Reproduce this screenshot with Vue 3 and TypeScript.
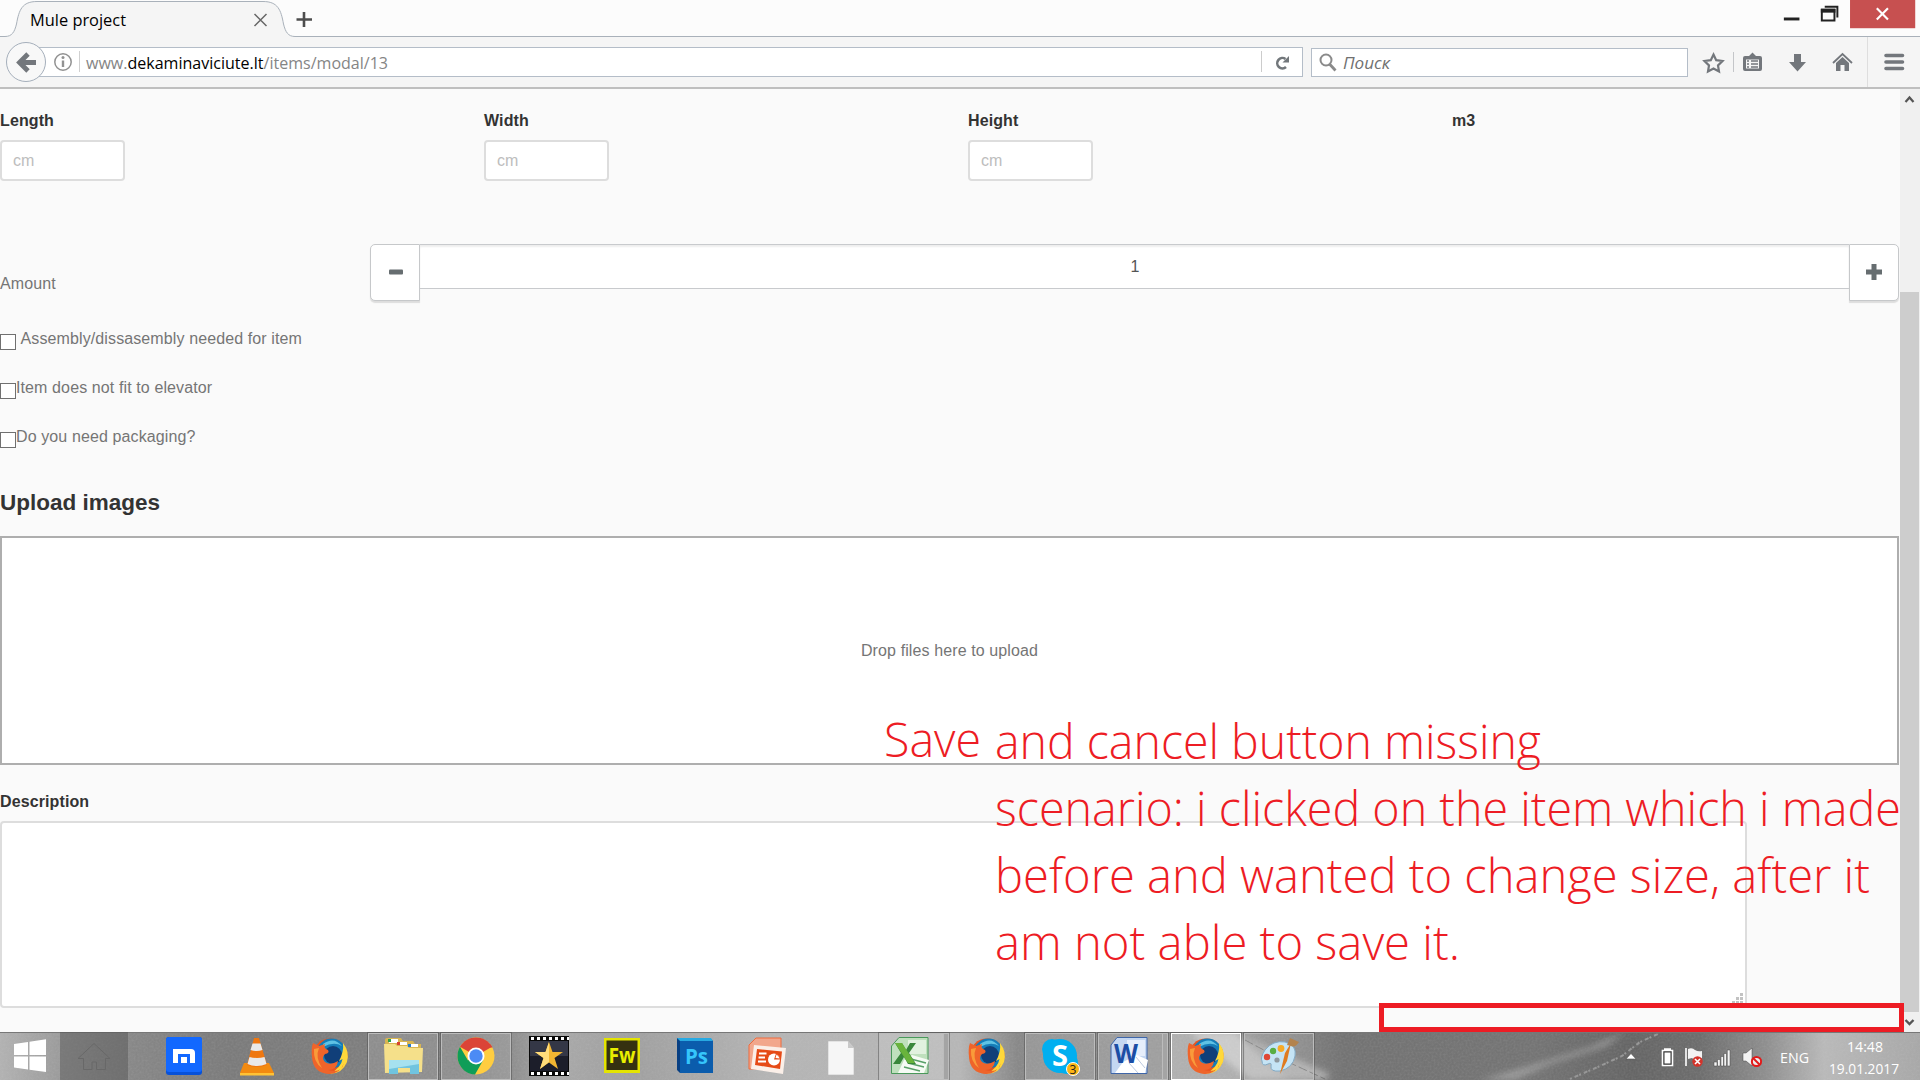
<script setup lang="ts">
interface Task {
  id: string
  state?: 'open' | 'active' | 'stack'
}

const dimensions: { label: string; input: boolean }[] = [
  { label: 'Length', input: true },
  { label: 'Width', input: true },
  { label: 'Height', input: true },
  { label: 'm3', input: false },
]

const options: string[] = [
  '\u00a0Assembly/dissasembly needed for item',
  'Item does not fit to elevator',
  'Do you need packaging?',
]

const tasks: Task[] = [
  { id: 'maxthon' },
  { id: 'vlc' },
  { id: 'firefox' },
  { id: 'explorer', state: 'open' },
  { id: 'chrome', state: 'open' },
  { id: 'film' },
  { id: 'fw' },
  { id: 'ps' },
  { id: 'ppt' },
  { id: 'doc' },
  { id: 'excel', state: 'stack' },
  { id: 'firefox' },
  { id: 'skype', state: 'open' },
  { id: 'word', state: 'stack' },
  { id: 'firefox', state: 'active' },
  { id: 'paint', state: 'open' },
]
</script>

<template>
  <div class="screen">
    <header class="tabs">
      <svg class="tab" width="320" height="37" viewBox="0 0 320 37">
        <path d="M0 36.5H5C12 36.5 14.500 32 16.500 24C19 10 22 1.500 37 1.500H263C278 1.500 281 10 283.500 24C285.500 32 288 36.500 295 36.500V37H0Z" fill="#f5f5f5" />
        <path d="M0 36.500H5C12 36.500 14.500 32 16.500 24C19 10 22 1.500 37 1.500H263C278 1.500 281 10 283.500 24C285.500 32 288 36.500 295 36.500H320" fill="none" stroke="#a9b1ba" />
        <text x="30" y="26" textLength="96" lengthAdjust="spacingAndGlyphs" class="ui" font-size="16.500">Mule project</text>
        <path d="M254.500 14L266.500 26M266.500 14L254.500 26" stroke="#666" stroke-width="1.500" />
        <path d="M296.500 19.500H312M304 12V27" stroke="#4d4d4d" stroke-width="2.600" />
      </svg>
      <div class="tabs-rest"></div>
      <svg class="controls" width="138" height="37" viewBox="-1 0 138 37">
        <rect x="-1" y="18" width="16" height="3" fill="#222" />
        <path d="M41 7H54V18" fill="none" stroke="#222" stroke-width="2" />
        <path d="M38 10V21H51V10Z" fill="none" stroke="#222" stroke-width="2" />
        <path d="M37 9H52V13H37Z" fill="#222" />
        <rect x="67" y="0" width="67" height="29" fill="#c75050" />
        <path d="M94.500 8.500L106 20M106 8.500L94.500 20" stroke="#fff" stroke-width="2.200" />
      </svg>
    </header>

    <nav class="nav">
      <svg class="back" width="42" height="42" viewBox="0 0 42 42">
        <circle cx="21" cy="21" r="19.500" fill="#f8f8f8" stroke="#a5afbb" />
        <path d="M31 21.500H17M23 13L14.500 21.500L23 30" fill="none" stroke="#73777c" stroke-width="4.800" />
      </svg>
      <div class="url">
        <svg width="360" height="28" viewBox="0 0 360 28">
          <circle cx="23" cy="14" r="8.200" fill="none" stroke="#929292" stroke-width="1.500" />
          <path d="M23 12.500V19" stroke="#929292" stroke-width="2.400" />
          <circle cx="23" cy="9.500" r="1.500" fill="#929292" />
          <path d="M39.500 3V24" stroke="#d0d0d0" />
          <text x="46" y="21" textLength="302" lengthAdjust="spacingAndGlyphs" class="ui" font-size="16.500" fill="#858585">www.<tspan fill="#000">dekaminaviciute.lt</tspan>/items/modal/13</text>
        </svg>
        <svg class="reload" width="41" height="28" viewBox="0 0 41 28">
          <path d="M.5 3V24" stroke="#ccc" />
          <path d="M25 19A5.200 5.200 0 1 1 24.500 11" fill="none" stroke="#72777b" stroke-width="2.600" />
          <path d="M28 8V14.500H21.500Z" fill="#72777b" />
        </svg>
      </div>
      <div class="search">
        <svg width="120" height="27" viewBox="0 0 120 27">
          <circle cx="14" cy="11" r="5.500" fill="none" stroke="#8a8a8a" stroke-width="2" />
          <path d="M17.500 15L23.500 21.500" stroke="#8a8a8a" stroke-width="2.800" />
          <text x="31" y="20" textLength="47" lengthAdjust="spacingAndGlyphs" class="ui" font-size="16.500" font-style="italic" fill="#707070">Поиск</text>
        </svg>
      </div>
      <svg class="tools" width="232" height="50" viewBox="1688 37 232 50" fill="#73777c">
        <path d="M1713.500 54.500L1716.200 60.200L1722.500 61L1718 65.400L1719 71.500L1713.500 68.500L1708 71.500L1709 65.400L1704.500 61L1710.800 60.200Z" fill="none" stroke="#73777c" stroke-width="2.200" />
        <path d="M1733.500 52V72" stroke="#c4c6c9" />
        <path d="M1745 56H1749L1752.500 52.500L1756 56H1760Q1762 56 1762 58V69Q1762 71 1760 71H1745Q1743 71 1743 69V58Q1743 56 1745 56Z" />
        <path d="M1746 59.500H1759V68.500H1746Z" fill="#f5f5f5" />
        <path d="M1747 61H1749M1751 61H1758M1747 64H1749M1751 64H1758M1747 67H1749M1751 67H1758" stroke="#73777c" stroke-width="1.500" />
        <path d="M1794 54H1801V62H1806L1797.500 71.500L1789 62H1794Z" />
        <path d="M1833 63L1842.500 54L1852 63" fill="none" stroke="#73777c" stroke-width="1.800" />
        <path d="M1836 63L1842.500 57L1849 63V71H1844.500V65H1840.500V71H1836Z" />
        <path d="M1867.500 37V87" stroke="#dedede" />
        <path d="M1886 55.500H1902.500M1886 62H1902.500M1886 68.500H1902.500" stroke="#73777c" stroke-width="3.600" stroke-linecap="round" />
      </svg>
    </nav>

    <main class="viewport">
      <section class="page">
        <div class="dims">
          <div v-for="d in dimensions" :key="d.label" class="dim">
            <label class="bold">{{ d.label }}</label>
            <div v-if="d.input" class="field">cm</div>
          </div>
        </div>
        <div class="amount">
          <span class="amount-label">Amount</span>
          <button class="step left"><svg width="18" height="18"><rect x="2" y="6.500" width="14" height="5" rx="1" fill="#666d70" /></svg></button>
          <div class="count">1</div>
          <button class="step right"><svg width="18" height="18"><path d="M1 6.500H6.500V1H11.500V6.500H17V11.500H11.500V17H6.500V11.500H1Z" fill="#666d70" /></svg></button>
        </div>
        <div v-for="o in options" :key="o" class="option"><i class="box"></i><span>{{ o }}</span></div>
        <h2>Upload images</h2>
        <div class="drop">Drop files here to upload</div>
        <label class="bold desc">Description</label>
        <div class="area">
          <svg width="14" height="14" fill="#c2c2c2"><path d="M9 1h3v3H9zM5 5h3v3H5zM9 5h3v3H9zM1 9h3v3H1zM5 9h3v3H5zM9 9h3v3H9z" /></svg>
        </div>
      </section>
      <aside class="scroll">
        <svg width="20" height="20"><path d="M5.500 13L9.500 8.500L13.500 13" fill="none" stroke="#555" stroke-width="2.200" /></svg>
        <div class="thumb"></div>
        <svg width="20" height="20"><path d="M5.500 8L9.500 12L13.500 8" fill="none" stroke="#555" stroke-width="2.400" /></svg>
      </aside>
    </main>

    <footer class="taskbar">
      <svg class="wall" width="1920" height="48" viewBox="0 0 1920 48">
        <defs>
          <linearGradient id="wall">
            <stop offset="0" stop-color="#b2b2b2" /><stop offset=".03" stop-color="#9c9c9c" />
            <stop offset=".07" stop-color="#878787" /><stop offset=".12" stop-color="#7b7b7b" />
            <stop offset=".24" stop-color="#808080" /><stop offset=".265" stop-color="#8c8c8c" />
            <stop offset=".29" stop-color="#a9a9a9" /><stop offset=".33" stop-color="#a0a0a0" />
            <stop offset=".4" stop-color="#b4b4b4" /><stop offset=".5" stop-color="#b6b6b6" />
            <stop offset=".53" stop-color="#888" /><stop offset=".6" stop-color="#929292" />
            <stop offset=".65" stop-color="#909090" /><stop offset=".7" stop-color="#737373" />
            <stop offset=".8" stop-color="#747474" /><stop offset=".85" stop-color="#656565" />
            <stop offset=".885" stop-color="#6d6d6d" /><stop offset=".92" stop-color="#8f8f8f" />
            <stop offset=".95" stop-color="#b9b9b9" /><stop offset="1" stop-color="#a8a8a8" />
          </linearGradient>
          <filter id="soft" x="-10%" y="-50%" width="120%" height="200%"><feGaussianBlur stdDeviation="3" /></filter>
          <filter id="grain"><feTurbulence type="fractalNoise" baseFrequency=".5" numOctaves="2" /><feColorMatrix values="0 0 0 0 .7  0 0 0 0 .7  0 0 0 0 .7  .6 0 0 0 -.2" /></filter>
        </defs>
        <rect width="1920" height="48" fill="url(#wall)" />
        <g filter="url(#soft)">
          <path d="M1480 48L1530 34L1590 15L1625 0L1606 14L1550 32L1515 48Z" fill="#999" />
          <path d="M1190 0H1235L1290 48H1250Z" fill="#b8b8b8" />
          <path d="M1245 5L1330 42L1325 48H1290Z" fill="#aaa" />
        </g>
        <path d="M1570 47L1600 34L1622 24L1640 10L1658 2" fill="none" stroke="#959595" stroke-width="2" stroke-dasharray="2 3 4 1" />
        <path d="M1245 8L1275 24L1325 47" fill="none" stroke="#777" stroke-dasharray="9 3" />
        <rect width="1920" height="48" filter="url(#grain)" opacity=".35" />
        <path d="M0 .5H1920" stroke="#777" />
      </svg>
      <svg class="start" width="60" height="48" viewBox="0 0 60 48" fill="#fff">
        <path d="M14 12L28 10V23H14ZM29.500 9.800L46 7.300V23H29.500ZM14 24.500H28V37.500L14 35.500ZM29.500 24.500H46V40L29.500 37.700Z" />
      </svg>
      <svg class="homebtn" width="68" height="48" viewBox="0 0 68 48">
        <path d="M18 26.500L34 11.500L50 26.500H45.500V37.500H36.500V30H32V37.500H23.500V26.500Z" fill="none" stroke="#686868" />
      </svg>
      <div class="tasks">
        <div v-for="(t, i) in tasks" :key="i" class="task" :class="t.state">
          <svg class="icon" width="40" height="40" viewBox="0 0 40 40">
            <g v-if="t.id === 'maxthon'">
              <rect x="2" y="1" width="36" height="38" rx="3" fill="#0751d9" /><rect x="2" y="1" width="36" height="35" rx="3" fill="#1268ff" />
              <path d="M9 13H27Q31 13 31 17V27H26V18H14V27H9ZM17 21H23V27H17Z" fill="#fff" />
            </g>
            <g v-else-if="t.id === 'vlc'">
              <path d="M7 27H32L37 37V39H3V37Z" fill="#f28a10" /><path d="M3 37H37V39.500H3Z" fill="#ffc235" />
              <path d="M17 2H22L30 29Q20 33 10 29Z" fill="#ef7710" />
              <path d="M15.500 7.500H23.500L25.500 14Q20 16 13.500 14ZM12.500 21Q20 23 27.500 21L29.500 28Q20 32 10.500 28Z" fill="#e9e9e9" />
            </g>
            <g v-else-if="t.id === 'firefox'">
              <circle cx="20" cy="20" r="17.500" fill="#e95420" />
              <circle cx="21.500" cy="17.500" r="15" fill="#167db8" /><path d="M13 8Q24 0 32 10Q24 5 13 11Z" fill="#5fc2e4" />
              <circle cx="23" cy="19" r="9" fill="#103f79" />
              <path d="M33 7Q40 16 37 26Q32 38 20 37.500Q31 32 32.500 23L29 25Q34 16 33 7Z" fill="#ffd83a" />
              <path d="M3 7L9 10L15 8Q13 12 18 14Q20 17 15 18Q11 22 15 26Q20 30 28 25Q27 34 18 34Q31 38 34 27Q30 38 19 38Q3 37 2 21Q1 12 3 7Z" fill="#ef642a" />
              <path d="M4 13Q3 26 12 32Q5 21 9 12Z" fill="#f99b3a" />
            </g>
            <g v-else-if="t.id === 'explorer'">
              <path d="M2 4Q2 2 4 2H18L20 5H30L32 8H38V36H3Z" fill="#d9b651" />
              <path d="M6 3H15V7H6ZM15 6H24V9H15ZM26 8H35V11H26Z" fill="#fff" /><path d="M5 3H8V6H5Z" fill="#2ca14a" /><path d="M14 6H17V9H14Z" fill="#d9432f" /><path d="M25 8H28V11H25Z" fill="#2a7ccd" />
              <path d="M1 8H12L14 10H24L26 12H40L39 36L2 37Z" fill="#f5e08a" />
              <path d="M6 24H36V38H27V32H15V38H6Z" fill="#70c4df" /><path d="M6 24H36V28L6 33Z" fill="#a6e1ef" />
            </g>
            <g v-else-if="t.id === 'chrome'">
              <circle cx="20" cy="20" r="18.500" fill="#ffcd40" />
              <path d="M20 20L4 10.700A18.500 18.500 0 0 1 36 10.700Z" fill="#db4437" /><path d="M20 11.500H36.500L34 8Z" fill="#db4437" />
              <path d="M4 10.700A18.500 18.500 0 0 0 19 38.500L27 24.500L20 20L12 24.500Z" fill="#0f9d58" />
              <circle cx="20" cy="20" r="8.500" fill="#fff" /><circle cx="20" cy="20" r="6.700" fill="#4c8bf5" />
            </g>
            <g v-else-if="t.id === 'film'">
              <rect width="40" height="40" fill="#080808" /><rect x="1" y="5" width="38" height="30" fill="#343746" /><rect x="1" y="20" width="38" height="15" fill="#1c1e2a" />
              <path d="M2 2.500H40M2 37.500H40" stroke="#fff" stroke-width="3" stroke-dasharray="3 3" />
              <path d="M20 6L23.500 16H34L25.500 22L29 33L20 26.500L11 33L14.500 22L6 16H16.500Z" fill="#f2b632" /><path d="M20 6V26L11 33L14.500 22L6 16H16.500Z" fill="#ffdc7b" />
            </g>
            <g v-else-if="t.id === 'fw'">
              <rect x="2" y="2" width="36" height="35" fill="#e4e400" /><rect x="4.500" y="4.500" width="31" height="29.500" fill="#353110" />
              <text x="6.500" y="27" textLength="27" lengthAdjust="spacingAndGlyphs" class="ui" font-weight="700" font-size="21" fill="#e9ed00">Fw</text>
            </g>
            <g v-else-if="t.id === 'ps'">
              <path d="M2 2H35L38 5V37H5L2 34Z" fill="#073f83" /><path d="M2 2H36L38 5H5Z" fill="#27a9e2" /><rect x="5" y="5" width="33" height="32" fill="#0b5cac" />
              <text x="10" y="28" textLength="23" lengthAdjust="spacingAndGlyphs" class="ui" font-weight="700" font-size="21" fill="#35c5fb">Ps</text>
            </g>
            <g v-else-if="t.id === 'ppt'">
              <path d="M8 2H33V33H1V9Z" fill="#f2a78c" stroke="#ef6b3c" /><path d="M6 9L38 12L35 38L3 33Z" fill="#fbefe8" />
              <path d="M9 13L34 15.500L32 33L7 29Z" fill="#e64a16" />
              <path d="M11 17.500H18.500M10.500 21.500H17M10 25.500H18" stroke="#fff" stroke-width="2.200" /><circle cx="26" cy="23.500" r="6" fill="#fff" /><path d="M26 23.500L28 17.500Q32 19 32 23.500Z" fill="#e64a16" /><path d="M27.500 22L28.500 18.500Q31 20 31.500 22.500Z" fill="#fff" />
            </g>
            <g v-else-if="t.id === 'doc'">
              <path d="M7 5H27L33 12V39H7Z" fill="#f6f6f6" stroke="#b9b9b9" stroke-width=".6" /><path d="M27 5V12H33Z" fill="#c9c9c9" />
            </g>
            <g v-else-if="t.id === 'excel'">
              <path d="M9 1.500H38V37.500H1.500V10Z" fill="#bfe0bd" stroke="#49985a" /><path d="M18 4H36V18H18Z" fill="#e1f1df" />
              <path d="M14 24L22 19L39 24L34 37H8Z" fill="#f6fbf5" /><path d="M21 23L36 27M18 27L34 31M14 31L30 35" stroke="#58a068" stroke-width="1.500" />
              <path d="M5 7H12L16 14L20 7H26L19 17L26 28H18L14 21L10 28H3L11 17Z" fill="#39873b" /><path d="M5 7H12L25 27H18Z" fill="#69b43c" />
            </g>
            <g v-else-if="t.id === 'skype'">
              <circle cx="12" cy="13" r="10" fill="#00aff0" /><circle cx="27" cy="27" r="11" fill="#00aff0" /><circle cx="20" cy="20" r="17" fill="#00aff0" />
              <text x="20" y="30" text-anchor="middle" class="ui" font-weight="700" font-size="29" fill="#fff">S</text>
              <circle cx="33" cy="33" r="6.500" fill="#fcb514" stroke="#fff" /><text x="33" y="37.500" text-anchor="middle" class="ui" font-size="12" fill="#222">3</text>
            </g>
            <g v-else-if="t.id === 'word'">
              <path d="M8 1.500H38V37.500H2V9Z" fill="#c4d7f2" stroke="#3e65a8" /><path d="M18 4H36V20H18Z" fill="#e6eefb" />
              <path d="M14 26L28 19L39 24L36 37H6Z" fill="#fff" /><path d="M27 21L36 32M20 27L29 37" stroke="#bdcae0" />
              <text x="5" y="27" textLength="24" lengthAdjust="spacingAndGlyphs" class="ui" font-weight="700" font-size="27" fill="#1b4da5">W</text>
            </g>
            <g v-else>
              <path d="M3 25Q1 22 6 14Q14 4 26 6Q38 9 36 20Q34 32 21 35Q11 36 12 30Q13 26 9 28Q3 31 3 25Z" fill="#c5e4f5" stroke="#83abc6" />
              <circle cx="8" cy="21" r="3.200" fill="#df4736" /><circle cx="14" cy="15" r="3.200" fill="#58ae43" /><circle cx="22" cy="12.500" r="3.400" fill="#f7ab27" /><circle cx="18" cy="24" r="2.600" fill="#8f999f" />
              <path d="M32 7L28 25L21 38L26 17Z" fill="#df7b20" /><path d="M31 2L40 6Q36 12 32 10L28 9Z" fill="#b3834d" />
            </g>
          </svg>
        </div>
      </div>
      <svg class="tray" width="320" height="48" viewBox="1600 1032 320 48">
        <path d="M1626 1059L1631 1053.500L1636 1059Z" fill="#fff" stroke="#555" stroke-width=".6" />
        <path d="M1664 1049H1671M1662.500 1050.500H1672.500V1065.500H1662.500Z" fill="#333" stroke="#fff" stroke-width="1.600" /><rect x="1664.500" y="1052.500" width="6" height="11" fill="#fff" />
        <path d="M1686 1048V1066" stroke="#fff" stroke-width="1.600" /><path d="M1688 1049Q1692 1047 1695 1050Q1698 1052 1702 1051V1058Q1695 1061 1692 1058L1688 1059Z" fill="#f3f3f3" />
        <circle cx="1697.500" cy="1061.500" r="5.200" fill="#d4332a" /><path d="M1695 1059L1700 1064M1700 1059L1695 1064" stroke="#fff" stroke-width="1.600" />
        <path d="M1714 1062H1717V1066H1714ZM1717.500 1059.500H1720.200V1066H1717.500ZM1721 1056.500H1723.500V1066H1721ZM1724 1053.500H1726.500V1066H1724ZM1727.300 1050H1730V1066H1727.300Z" fill="#f4f4f4" stroke="#444" stroke-width=".5" />
        <path d="M1743 1053H1746L1752 1048V1066L1746 1061H1743Z" fill="#f3f3f3" stroke="#444" stroke-width=".5" />
        <circle cx="1756.500" cy="1061.500" r="4.600" fill="#eee" stroke="#e21a1a" stroke-width="2" /><path d="M1753.500 1058.500L1759.500 1064.500" stroke="#e21a1a" stroke-width="2" />
        <g class="ui" font-size="15" fill="#fff">
          <text x="1780" y="1063" textLength="29" lengthAdjust="spacingAndGlyphs">ENG</text>
          <text x="1847" y="1052" textLength="36" lengthAdjust="spacingAndGlyphs">14:48</text>
          <text x="1829" y="1074" textLength="70" lengthAdjust="spacingAndGlyphs">19.01.2017</text>
        </g>
      </svg>
    </footer>

    <svg class="note" width="1920" height="1080" viewBox="0 0 1920 1080">
      <g class="ui" font-size="48" font-weight="300" fill="#ed1c24">
        <text x="884" y="756.500" textLength="97" lengthAdjust="spacingAndGlyphs">Save</text>
        <text x="995" y="758.500" textLength="546" lengthAdjust="spacingAndGlyphs">and cancel button missing</text>
        <text x="995" y="825.500" textLength="906" lengthAdjust="spacingAndGlyphs">scenario: i clicked on the item which i made</text>
        <text x="995" y="892.500" textLength="875" lengthAdjust="spacingAndGlyphs">before and wanted to change size, after it</text>
        <text x="995" y="959.500" textLength="465" lengthAdjust="spacingAndGlyphs">am not able to save it.</text>
      </g>
      <rect x="1381.500" y="1005.500" width="520" height="24" fill="none" stroke="#ed1c24" stroke-width="5" />
    </svg>
  </div>
</template>

<style>
body { margin: 0; overflow: hidden; }
</style>

<style scoped>
.screen { position: relative; width: 1920px; height: 1080px; overflow: hidden; display: flex; flex-direction: column; background: #fafafa; font: 16px/20px "Liberation Sans", Arial, sans-serif; color: #757575; }
.screen * { box-sizing: border-box; }
svg { display: block; flex: none; }
.ui { font-family: "Open Sans", "Noto Sans", sans-serif; }
.tabs { height: 37px; display: flex; background: #fcfcfc; }
.tabs-rest { flex: 1; border-bottom: 1px solid #a9b1ba; }
.controls { border-bottom: 1px solid #a9b1ba; overflow: visible; }
.nav { height: 52px; display: flex; align-items: flex-start; background: #f5f5f5; border-bottom: 2px solid #bfbfbf; }
.back { margin: 4px 0 0 5px; position: relative; z-index: 1; }
.url { width: 1264px; height: 30px; margin: 10px 0 0 -8px; display: flex; justify-content: space-between; background: #fff; border: 1px solid #b4bdc8; }
.search { width: 377px; height: 29px; margin: 11px 0 0 8px; background: #fff; border: 1px solid #b4bdc8; }
.tools { margin-left: 0; }
.viewport { height: 943px; display: flex; }
.page { width: 1900px; letter-spacing: .11px; }
.dims { display: flex; padding-top: 22px; height: 155px; }
.dim { width: 484px; flex: none; }
.dim:last-child { width: 448px; }
.bold { display: block; font-weight: 700; color: #333; }
.field { width: 125px; height: 41px; margin-top: 9px; padding: 0 11px; border: 2px solid #ddd; border-radius: 4px; background: #fff; color: #bdbdbd; line-height: 37px; }
.amount { height: 90px; width: 1899px; display: flex; align-items: flex-start; }
.amount-label { width: 370px; margin-top: 30px; }
.step { width: 50px; height: 57px; padding: 0 0 2px 1px; display: flex; align-items: center; justify-content: center; background: #fff; border: 1px solid #c6c8ca; box-shadow: 0 2px 1px #ddd; }
.left { border-radius: 5px 0 0 5px; }
.right { border-radius: 0 5px 5px 0; padding-left: 0; }
.count { flex: 1; height: 45px; padding-left: 1px; background: #fff; border: solid #c8cacd; border-width: 1px 0; box-shadow: inset 0 2px 2px #eee; text-align: center; line-height: 43px; color: #555; }
.option { height: 49px; display: flex; align-items: flex-start; line-height: 19px; }
.option span { margin-top: -5px; }
.box { width: 16px; height: 16px; border: 1px solid #707070; background: #fff; }
h2 { margin: 8px 0 21px; height: 26px; font-size: 22.500px; line-height: 27px; letter-spacing: 0; color: #333; }
.drop { width: 1899px; height: 229px; border: 2px solid #aeaeae; background: #fff; display: flex; align-items: center; justify-content: center; }
.desc { margin: 27px 0 9px; }
.area { width: 1747px; height: 187px; border: 2px solid #ddd; border-radius: 4px; background: #fff; display: flex; align-items: flex-end; justify-content: flex-end; }
.scroll { width: 20px; background: #f0f0f0; display: flex; flex-direction: column; }
.thumb { flex: 1; width: 19px; margin-top: 183px; background: #cdcdcd; }
.taskbar { position: relative; height: 48px; display: flex; }
.wall { position: absolute; left: 0; top: 0; }
.start, .homebtn, .tasks, .tray { position: relative; }
.homebtn { background: rgba(80, 80, 80, .45); }
.tasks { flex: 1; display: flex; gap: 3px; padding: 1px 0 0 21px; }
.task { width: 70px; height: 47px; flex: none; display: flex; justify-content: center; padding-top: 2px; border: 1px solid transparent; }
.open, .active, .stack { border-color: #bcbcbc; background: rgba(255, 255, 255, .12); outline: 1px solid rgba(70, 70, 70, .45); outline-offset: 0; }
.active { border: 1px solid #fff; background: rgba(255, 255, 255, .28); }
.stack { padding-right: 8px; box-shadow: inset -4px 0 0 rgba(120, 120, 120, .35), inset -5px 0 0 #bcbcbc; }
.tray { margin-left: auto; }
.note { position: absolute; left: 0; top: 0; pointer-events: none; }
</style>
